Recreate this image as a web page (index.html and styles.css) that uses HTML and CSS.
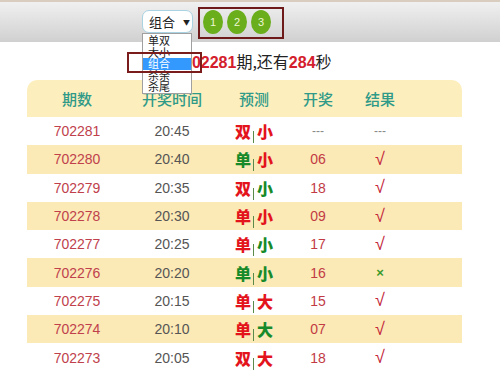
FILE: index.html
```html
<!DOCTYPE html>
<html lang="zh-CN">
<head>
    <meta charset="UTF-8">
    <meta name="viewport" content="width=device-width, initial-scale=1.0">
    <title>开奖预测</title>
    <link rel="stylesheet" href="styles.css">
</head>
<body>
    <div class="topbar">
        <div class="picker">
            <div class="select">组合<span class="arrow">▼</span></div>
            <ul class="options">
                <li>单双</li>
                <li>大小</li>
                <li class="active">组合</li>
                <li>杀余</li>
                <li>杀尾</li>
            </ul>
            <div class="mark"></div>
        </div>
        <div class="pages">
            <span class="dot">1</span>
            <span class="dot">2</span>
            <span class="dot">3</span>
        </div>
    </div>

    <p class="countdown">第<b>702281</b>期,还有<b>284</b>秒</p>

    <div class="card">
        <table>
            <colgroup>
                <col class="c1"><col class="c2"><col class="c3"><col class="c4"><col class="c5"><col>
            </colgroup>
            <thead>
                <tr><th>期数</th><th>开奖时间</th><th>预测</th><th>开奖</th><th>结果</th><th></th></tr>
            </thead>
            <tbody>
                <tr><td class="no">702281</td><td class="time">20:45</td><td><span class="red">双</span><i class="sep"></i><span class="red">小</span></td><td class="dash">---</td><td class="dash">---</td><td></td></tr>
                <tr><td class="no">702280</td><td class="time">20:40</td><td><span class="green">单</span><i class="sep"></i><span class="red">小</span></td><td class="num">06</td><td class="ok">√</td><td></td></tr>
                <tr><td class="no">702279</td><td class="time">20:35</td><td><span class="red">双</span><i class="sep"></i><span class="green">小</span></td><td class="num">18</td><td class="ok">√</td><td></td></tr>
                <tr><td class="no">702278</td><td class="time">20:30</td><td><span class="red">单</span><i class="sep"></i><span class="red">小</span></td><td class="num">09</td><td class="ok">√</td><td></td></tr>
                <tr><td class="no">702277</td><td class="time">20:25</td><td><span class="red">单</span><i class="sep"></i><span class="green">小</span></td><td class="num">17</td><td class="ok">√</td><td></td></tr>
                <tr><td class="no">702276</td><td class="time">20:20</td><td><span class="green">单</span><i class="sep"></i><span class="green">小</span></td><td class="num">16</td><td class="fail">×</td><td></td></tr>
                <tr><td class="no">702275</td><td class="time">20:15</td><td><span class="red">单</span><i class="sep"></i><span class="red">大</span></td><td class="num">15</td><td class="ok">√</td><td></td></tr>
                <tr><td class="no">702274</td><td class="time">20:10</td><td><span class="red">单</span><i class="sep"></i><span class="green">大</span></td><td class="num">07</td><td class="ok">√</td><td></td></tr>
                <tr><td class="no">702273</td><td class="time">20:05</td><td><span class="red">双</span><i class="sep"></i><span class="red">大</span></td><td class="num">18</td><td class="ok">√</td><td></td></tr>
            </tbody>
        </table>
    </div>
</body>
</html>
```

FILE: styles.css
```css
body{
    margin: 0;
    background: #fff;
    font-family: "Liberation Sans", "Noto Sans CJK SC", sans-serif;
    overflow: hidden;
}

.topbar{
    height: 40px;
    border-top: 2px solid #d9cdbf;
    background: linear-gradient(#f0f0f0, #d0d0d0);
    display: flex;
    align-items: flex-start;
    padding-left: 142px;
    position: relative;
    z-index: 2;
}

.picker{
    position: relative;
    margin-top: 8px;
}

.select{
    width: 51px;
    height: 23px;
    border: 1px solid #a9d3e2;
    border-radius: 7px;
    background: #fff;
    font-size: 13px;
    line-height: 21px;
    padding-left: 6px;
    box-sizing: border-box;
    color: #222;
    font-family: "Noto Sans CJK SC", sans-serif;
}
.arrow{
    font-size: 7px;
    margin-left: 8px;
    vertical-align: 2px;
}

.options{
    position: absolute;
    top: 23px;
    left: 0;
    width: 50px;
    margin: 0;
    padding: 1px 0 0;
    list-style: none;
    background: #fff;
    border: 1px solid #a0a0a0;
    box-sizing: border-box;
    font-family: "Noto Sans CJK SC", sans-serif;
    font-size: 11px;
    color: #222;
}
.options li{
    height: 11.6px;
    line-height: 11.6px;
    padding-left: 5px;
}
.options .active{
    background: #3399ff;
    color: #fff;
}

.mark{
    position: absolute;
    left: -15px;
    top: 42px;
    width: 75px;
    height: 21px;
    border: 2px solid #7a1c1c;
    box-sizing: border-box;
}

.pages{
    margin-left: 5px;
    margin-top: 5px;
    width: 86px;
    height: 32px;
    border: 2px solid #6e1a1a;
    box-sizing: border-box;
    display: flex;
    gap: 4px;
    padding: 1px 0 0 3px;
}
.dot{
    width: 20px;
    height: 24px;
    border-radius: 50%;
    background: #6aae1c;
    color: #eef7d4;
    font-size: 11px;
    line-height: 24px;
    text-align: center;
}

.countdown{
    margin: 0;
    height: 38px;
    line-height: 38px;
    padding-left: 167px;
    font-family: "Noto Sans CJK SC", sans-serif;
    font-size: 16px;
    color: #222;
}
.countdown b{
    color: #d4202c;
    font-family: "Liberation Sans", sans-serif;
}

.card{
    margin-left: 27px;
    width: 435px;
    border-radius: 10px 10px 0 0;
    overflow: hidden;
}

table{
    width: 100%;
    border-collapse: collapse;
    table-layout: fixed;
}
.c1{width: 100px;}
.c2{width: 90px;}
.c3{width: 74px;}
.c4{width: 54px;}
.c5{width: 70px;}

th{
    height: 37px;
    padding: 0;
    background: #fdeebd;
    color: #2f9a88;
    font-family: "Noto Sans CJK SC", sans-serif;
    font-weight: 500;
    font-size: 15px;
}

td{
    height: 28.3px;
    padding: 0;
    text-align: center;
    font-size: 14px;
}
tbody tr:nth-child(even) td{
    background: #fbe9b6;
}

.no{color: #c0414c;}
.time{color: #555;}
.num{color: #c23b44;}
.dash{color: #888; font-size: 12px;}
.ok{color: #c4253a; font-size: 18px;}
.fail{color: #3a9a2a; font-size: 13px; font-weight: bold;}

.red, .green{
    font-family: "Noto Sans CJK SC", sans-serif;
    font-weight: 900;
    font-size: 16px;
}
.red{color: #e3141c;}
.green{color: #178a2a;}

.sep{
    display: inline-block;
    width: 1px;
    height: 12px;
    background: #5a8a4a;
    margin: 0 3px 0 2px;
    vertical-align: -5px;
}
```
